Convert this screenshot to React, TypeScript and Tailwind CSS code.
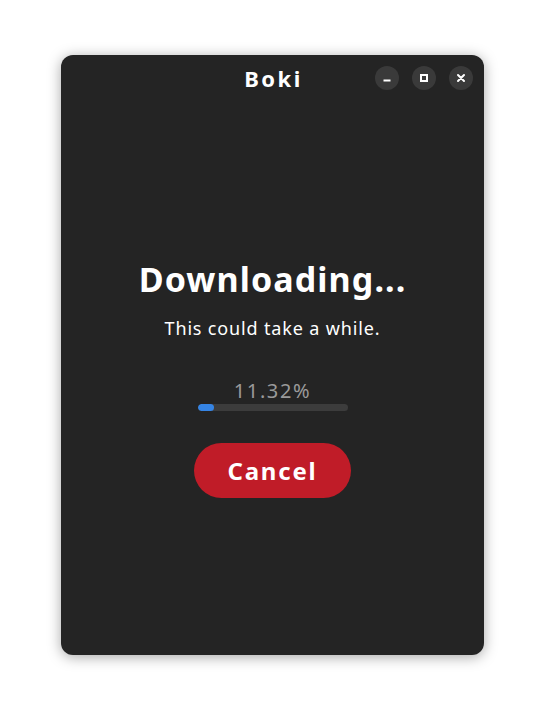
import React from 'react';

export default function App() {
    const progress = 11.32;

    return (
        <div className="w-[545px] h-[722px] bg-white flex items-start justify-center pt-[55px]" style={{ fontFamily: '"Noto Sans", "Open Sans", sans-serif' }}>
            <div className="w-[423px] h-[600px] bg-[#242424] rounded-[12px] shadow-[0_2px_14px_rgba(0,0,0,0.35)] flex flex-col">
                {/* Header bar */}
                <div className="relative h-[46px] flex items-center justify-center">
                    <span className="text-white text-[22px] font-bold tracking-[2.5px] pl-[2px]">Boki</span>
                    <div className="absolute right-[11px] top-[11px] flex items-center gap-[13px]">
                        <button className="w-6 h-6 rounded-full bg-[#3a3a3a] flex items-center justify-center">
                            <svg width="10" height="10" viewBox="0 0 10 10"><rect x="1.5" y="6.5" width="7" height="2" fill="white" /></svg>
                        </button>
                        <button className="w-6 h-6 rounded-full bg-[#3a3a3a] flex items-center justify-center">
                            <svg width="10" height="10" viewBox="0 0 10 10"><rect x="2" y="2" width="6" height="6" fill="none" stroke="white" strokeWidth="2" /></svg>
                        </button>
                        <button className="w-6 h-6 rounded-full bg-[#3a3a3a] flex items-center justify-center">
                            <svg width="10" height="10" viewBox="0 0 10 10"><path d="M2 2l6 6M8 2l-6 6" stroke="white" strokeWidth="2" strokeLinecap="round" /></svg>
                        </button>
                    </div>
                </div>

                {/* Status content */}
                <div className="flex flex-col items-center pt-[156px]">
                    <h1 className="text-white text-[34px] leading-[44px] font-bold tracking-[1.1px]">Downloading...</h1>
                    <p className="text-white text-[18px] leading-[24px] mt-[15px] tracking-[0.85px]">This could take a while.</p>
                    <div className="text-[#9a9a9a] text-[20px] leading-[26px] mt-[38px] tracking-[1.6px]">{progress.toFixed(2)}%</div>
                    <div className="w-[150px] h-[7px] rounded-full bg-[#3c3c3c] overflow-hidden">
                        <div className="h-full rounded-full bg-[#3584e4]" style={{ width: `${progress}%` }} />
                    </div>
                    <button className="mt-[32px] w-[157px] h-[55px] rounded-full bg-[#c01c28] text-white text-[24px] font-bold tracking-[1.8px]">
                        Cancel
                    </button>
                </div>
            </div>
        </div>
    );
}
